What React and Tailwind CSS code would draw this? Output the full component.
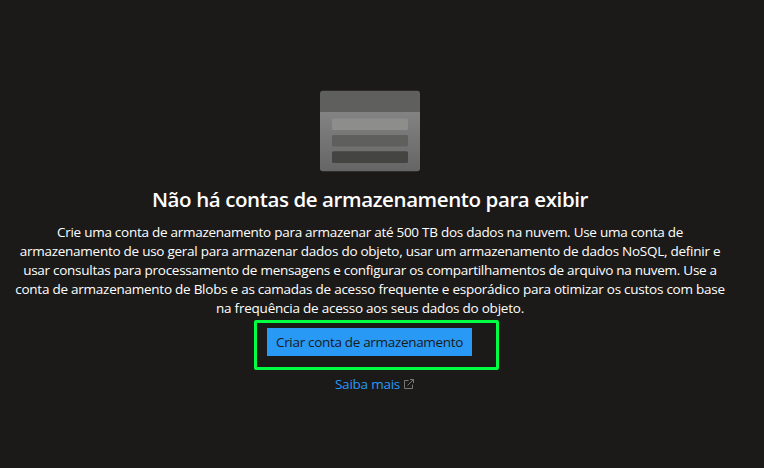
const lines = [
  { text: 'Crie uma conta de armazenamento para armazenar até 500 TB dos dados na nuvem. Use uma conta de', spacing: 'tracking-[-0.27px]' },
  { text: 'armazenamento de uso geral para armazenar dados do objeto, usar um armazenamento de dados NoSQL, definir e', spacing: 'tracking-[-0.26px]' },
  { text: 'usar consultas para processamento de mensagens e configurar os compartilhamentos de arquivo na nuvem. Use a', spacing: 'tracking-[-0.27px]' },
  { text: 'conta de armazenamento de Blobs e as camadas de acesso frequente e esporádico para otimizar os custos com base', spacing: 'tracking-[-0.25px]' },
  { text: 'na frequência de acesso aos seus dados do objeto.', spacing: 'tracking-[-0.23px]' },
];

function StorageIcon() {
  return (
    <svg className="block h-[82px] w-[100px]" viewBox="0 0 100 82" fill="none">
      <defs>
        <linearGradient id="body" x1="0" y1="21" x2="0" y2="81" gradientUnits="userSpaceOnUse">
          <stop stopColor="#838383" />
          <stop offset="1" stopColor="#656565" />
        </linearGradient>
      </defs>
      <path d="M0 22H100V78.500Q100 81.300 97.200 81.300H2.800Q0 81.300 0 78.500Z" fill="url(#body)" />
      <path d="M2.800 0.700H97.200Q100 0.700 100 3.500V22H0V3.500Q0 0.700 2.800 0.700Z" fill="#5f5f5d" />
      <rect x="12" y="28.500" width="76" height="11.500" rx="1.500" fill="#8d8d8b" />
      <rect x="12" y="45" width="76" height="11.500" rx="1.500" fill="#5f5f5d" />
      <rect x="12" y="61.300" width="76" height="11.700" rx="1.500" fill="#444442" />
    </svg>
  );
}

function ExternalIcon() {
  return (
    <svg className="block h-3 w-3" viewBox="0 0 12 12" fill="none" stroke="#797775">
      <path d="M5.500 2.500H1.500V10.500H9.500V6.500M4.500 7.500L10.500 1.500M7 1.500H10.500V5" />
    </svg>
  );
}

export default function App() {
  return (
    <main className="flex h-[468px] w-[764px] flex-col items-start overflow-hidden bg-[#1b1a19] font-['Open_Sans','Noto_Sans',sans-serif] text-white">
      <section className="flex w-[740px] flex-col items-center pt-[90px]">
        <StorageIcon />
        <h1 className="mt-[12px] h-[30px] text-[20.500px] leading-[30px] font-semibold tracking-[-0.4px] whitespace-nowrap">
          Não há contas de armazenamento para exibir
        </h1>
        <p className="mt-[9px] flex flex-col items-center text-[13.500px] leading-[19px]">
          {lines.map((line) => (
            <span key={line.text} className={`whitespace-nowrap ${line.spacing}`}>{line.text}</span>
          ))}
        </p>
        <div className="mt-[2px] ml-[13px] h-[50px] w-[245px] rounded-[2px] border-3 border-[#00ff40] pt-[5px] pl-[10px]">
          <button className="flex h-7 w-[205px] items-center justify-center bg-[#2899f5] text-[13.500px] leading-7 tracking-[-0.32px] whitespace-nowrap text-[#1b1a19]">
            Criar conta de armazenamento
          </button>
        </div>
        <a className="mt-[4px] ml-[10px] flex h-5 items-center gap-[3px] text-[13.500px] leading-5 text-[#2899f5]">
          <span className="tracking-[-0.23px]">Saiba mais</span>
          <ExternalIcon />
        </a>
      </section>
    </main>
  );
}
